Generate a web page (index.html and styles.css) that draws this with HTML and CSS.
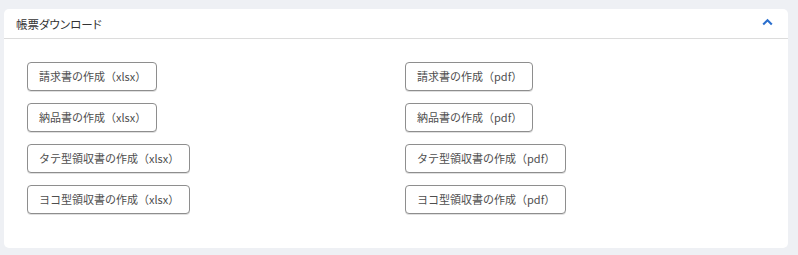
FILE: index.html
```html
<!DOCTYPE html>
<html lang="ja">
<head>
<meta charset="utf-8">
<title>帳票ダウンロード</title>
<link rel="stylesheet" href="styles.css">
</head>
<body>
<section class="card">
  <header class="card-header">
    <h2 class="card-title">帳票ダウンロード</h2>
    <svg class="chevron" width="11" height="8" viewBox="0 0 11 8" aria-hidden="true">
      <path d="M1.2 6.6 L5.5 2.3 L9.8 6.6" fill="none" stroke="#2b6fce" stroke-width="2.1"/>
    </svg>
  </header>
  <div class="card-body">
    <div class="cell"><button class="btn">請求書の作成（xlsx）</button></div>
    <div class="cell"><button class="btn">請求書の作成（pdf）</button></div>
    <div class="cell"><button class="btn">納品書の作成（xlsx）</button></div>
    <div class="cell"><button class="btn">納品書の作成（pdf）</button></div>
    <div class="cell"><button class="btn">タテ型領収書の作成（xlsx）</button></div>
    <div class="cell"><button class="btn">タテ型領収書の作成（pdf）</button></div>
    <div class="cell"><button class="btn">ヨコ型領収書の作成（xlsx）</button></div>
    <div class="cell"><button class="btn">ヨコ型領収書の作成（pdf）</button></div>
  </div>
</section>
</body>
</html>
```

FILE: styles.css
```css
html, body {
  margin: 0;
  padding: 0;
}
body {
  background: #eef0f4;
  padding: 9px 10px 7px 4px;
  font-family: "Noto Sans CJK JP", "Noto Sans", sans-serif;
}
.card {
  width: 784px;
  height: 239px;
  background: #ffffff;
  border-radius: 5px;
  box-sizing: border-box;
}
.card-header {
  height: 29px;
  border-bottom: 1px solid #dcdcdc;
  display: flex;
  align-items: center;
  justify-content: space-between;
  padding: 0 15px 0 12px;
}
.card-title {
  margin: 0;
  font-size: 11.5px;
  font-weight: 400;
  color: #333333;
  font-feature-settings: "palt";
}
.chevron {
  display: block;
  margin-top: -3px;
}
.card-body {
  padding: 23px 23px 0 23px;
  display: grid;
  grid-template-columns: 1fr 1fr;
  column-gap: 18px;
  row-gap: 12px;
}
.cell {
  display: flex;
}
.btn {
  height: 29px;
  box-sizing: border-box;
  padding: 0 10px 0 11px;
  border: 1px solid #8e8e8e;
  border-radius: 4px;
  background: #ffffff;
  box-shadow: 0 1px 0 rgba(0,0,0,0.12);
  color: #4e4e4e;
  font-family: "Noto Sans CJK JP", "Noto Sans", sans-serif;
  font-size: 11px;
  line-height: 1;
  cursor: pointer;
}
```
